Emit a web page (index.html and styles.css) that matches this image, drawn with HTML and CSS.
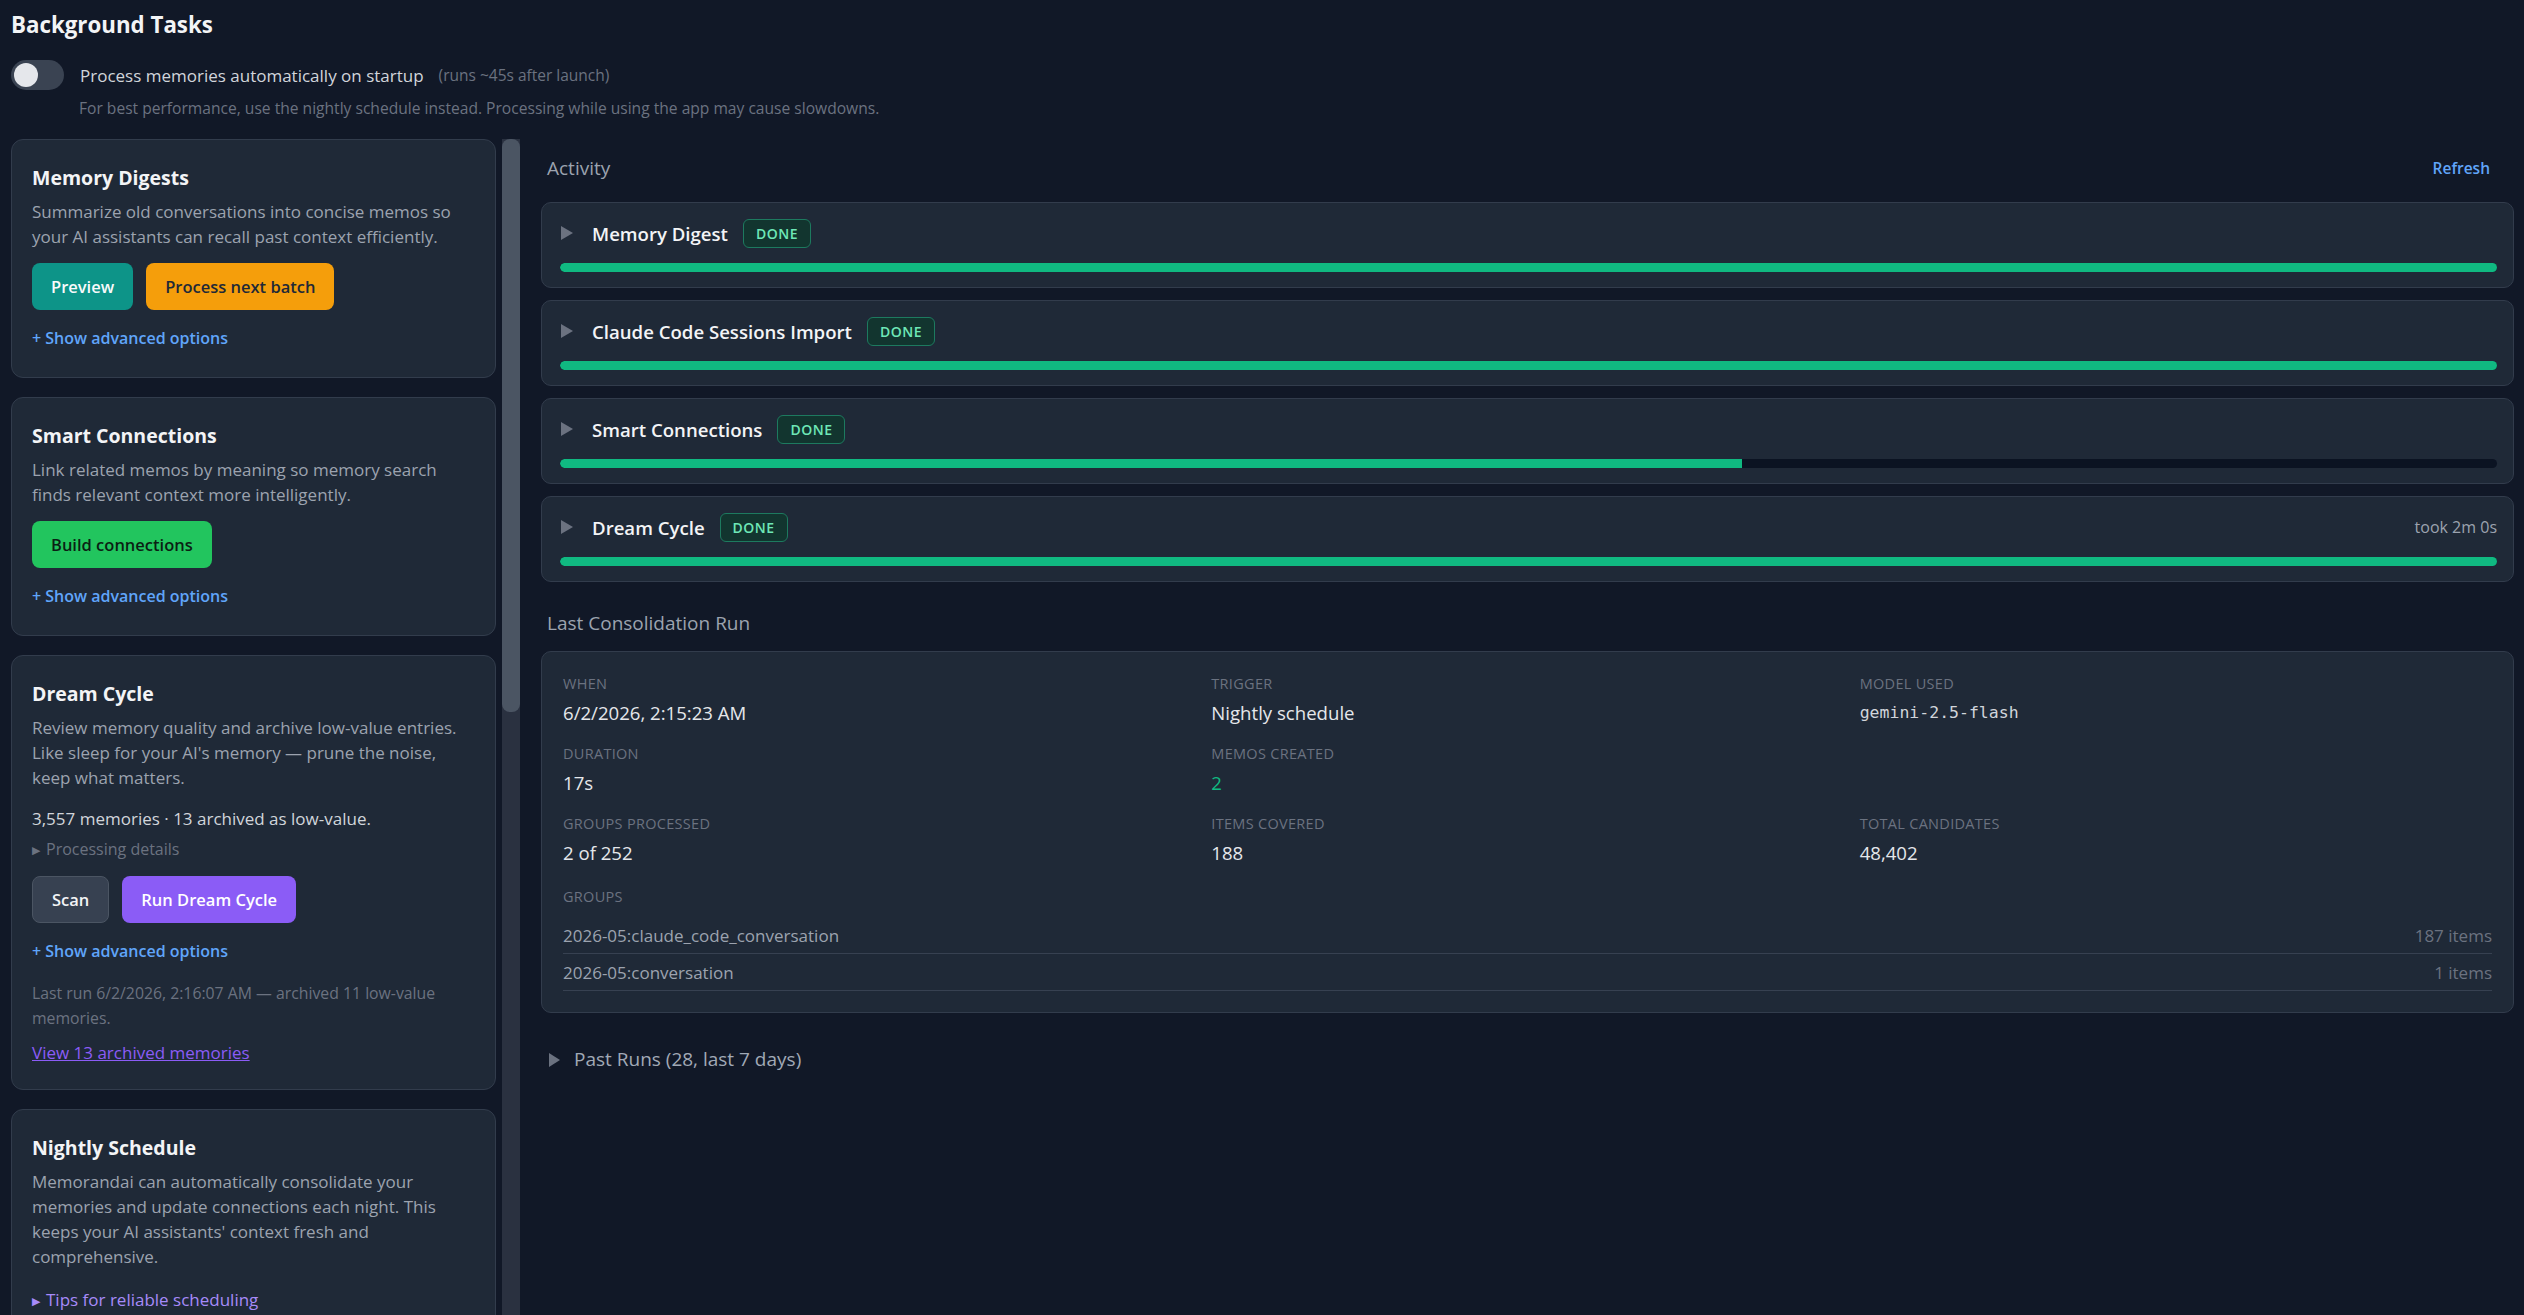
FILE: index.html
```html
<!DOCTYPE html>
<html lang="en">
<head>
    <meta charset="UTF-8">
    <meta name="viewport" content="width=device-width, initial-scale=1.0">
    <title>Background Tasks</title>
    <link rel="stylesheet" href="styles.css">
</head>
<body>
<div class="page">
    <header class="page-head">
        <h1>Background Tasks</h1>
        <div class="startup-row">
            <span class="toggle"><span class="knob"></span></span>
            <span class="startup-label">Process memories automatically on startup</span>
            <span class="startup-hint">(runs ~45s after launch)</span>
        </div>
        <p class="startup-note">For best performance, use the nightly schedule instead. Processing while using the app may cause slowdowns.</p>
    </header>

    <div class="layout">
        <div class="sidebar-wrap">
            <aside class="sidebar">
                <section class="card">
                    <h2>Memory Digests</h2>
                    <p class="desc">Summarize old conversations into concise memos so your AI assistants can recall past context efficiently.</p>
                    <div class="actions">
                        <button class="btn btn-teal">Preview</button>
                        <button class="btn btn-amber">Process next batch</button>
                    </div>
                    <a class="advanced" href="#">+ Show advanced options</a>
                </section>

                <section class="card">
                    <h2>Smart Connections</h2>
                    <p class="desc">Link related memos by meaning so memory search finds relevant context more intelligently.</p>
                    <div class="actions">
                        <button class="btn btn-green">Build connections</button>
                    </div>
                    <a class="advanced" href="#">+ Show advanced options</a>
                </section>

                <section class="card">
                    <h2>Dream Cycle</h2>
                    <p class="desc">Review memory quality and archive low-value entries. Like sleep for your AI's memory — prune the noise, keep what matters.</p>
                    <p class="stats">3,557 memories · 13 archived as low-value.</p>
                    <details class="details">
                        <summary>Processing details</summary>
                    </details>
                    <div class="actions">
                        <button class="btn btn-gray">Scan</button>
                        <button class="btn btn-violet">Run Dream Cycle</button>
                    </div>
                    <a class="advanced" href="#">+ Show advanced options</a>
                    <p class="last-run">Last run 6/2/2026, 2:16:07 AM — archived 11 low-value memories.</p>
                    <a class="archived" href="#">View 13 archived memories</a>
                </section>

                <section class="card">
                    <h2>Nightly Schedule</h2>
                    <p class="desc">Memorandai can automatically consolidate your memories and update connections each night. This keeps your AI assistants' context fresh and comprehensive.</p>
                    <details class="tips">
                        <summary>Tips for reliable scheduling</summary>
                    </details>
                </section>
            </aside>
            <!-- the list is taller than the window; its scrollbar is drawn here -->
            <div class="scroll-track"><div class="scroll-thumb"></div></div>
        </div>

        <main class="activity">
            <div class="section-head">
                <span class="section-title">Activity</span>
                <a class="refresh" href="#">Refresh</a>
            </div>

            <div class="task">
                <div class="task-head">
                    <span class="caret"></span>
                    <span class="task-name">Memory Digest</span>
                    <span class="badge">DONE</span>
                </div>
                <div class="bar"><div class="bar-fill" style="width: 100%"></div></div>
            </div>

            <div class="task">
                <div class="task-head">
                    <span class="caret"></span>
                    <span class="task-name">Claude Code Sessions Import</span>
                    <span class="badge">DONE</span>
                </div>
                <div class="bar"><div class="bar-fill" style="width: 100%"></div></div>
            </div>

            <div class="task">
                <div class="task-head">
                    <span class="caret"></span>
                    <span class="task-name">Smart Connections</span>
                    <span class="badge">DONE</span>
                </div>
                <div class="bar"><div class="bar-fill" style="width: 61%"></div></div>
            </div>

            <div class="task">
                <div class="task-head">
                    <span class="caret"></span>
                    <span class="task-name">Dream Cycle</span>
                    <span class="badge">DONE</span>
                    <span class="took">took 2m 0s</span>
                </div>
                <div class="bar"><div class="bar-fill" style="width: 100%"></div></div>
            </div>

            <div class="section-head run-head">
                <span class="section-title">Last Consolidation Run</span>
            </div>

            <div class="run-panel">
                <div class="run-grid">
                    <div class="stat">
                        <div class="stat-label">When</div>
                        <div class="stat-value">6/2/2026, 2:15:23 AM</div>
                    </div>
                    <div class="stat">
                        <div class="stat-label">Trigger</div>
                        <div class="stat-value">Nightly schedule</div>
                    </div>
                    <div class="stat">
                        <div class="stat-label">Model used</div>
                        <div class="stat-value mono">gemini-2.5-flash</div>
                    </div>
                    <div class="stat">
                        <div class="stat-label">Duration</div>
                        <div class="stat-value">17s</div>
                    </div>
                    <div class="stat">
                        <div class="stat-label">Memos created</div>
                        <div class="stat-value good">2</div>
                    </div>
                    <div class="stat"></div>
                    <div class="stat">
                        <div class="stat-label">Groups processed</div>
                        <div class="stat-value">2 of 252</div>
                    </div>
                    <div class="stat">
                        <div class="stat-label">Items covered</div>
                        <div class="stat-value">188</div>
                    </div>
                    <div class="stat">
                        <div class="stat-label">Total candidates</div>
                        <div class="stat-value">48,402</div>
                    </div>
                </div>

                <div class="stat-label groups-label">Groups</div>
                <ul class="groups">
                    <li><span>2026-05:claude_code_conversation</span><span class="count">187 items</span></li>
                    <li><span>2026-05:conversation</span><span class="count">1 items</span></li>
                </ul>
            </div>

            <details class="past-runs">
                <summary>Past Runs (28, last 7 days)</summary>
            </details>
        </main>
    </div>
</div>
</body>
</html>
```

FILE: styles.css
```css
* {
    box-sizing: border-box;
}
html, body {
    height: 100%;
}
body {
    margin: 0;
    background-color: #111827;
    color: #e5e7eb;
    font-family: "Open Sans", "Noto Sans", sans-serif;
    overflow: hidden;
}
a {
    text-decoration: none;
}
.page {
    height: 100%;
    display: flex;
    flex-direction: column;
    padding: 10px 10px 0 11px;
}

/* header */
.page-head h1 {
    margin: 0;
    font-size: 22.3px;
    line-height: 30px;
    font-weight: 700;
    color: #f3f4f6;
}
.startup-row {
    display: flex;
    align-items: center;
    margin-top: 20px;
    height: 30px;
}
.toggle {
    position: relative;
    flex: none;
    width: 53px;
    height: 30px;
    border-radius: 15px;
    background-color: #3a4352;
}
.toggle .knob {
    position: absolute;
    left: 3px;
    top: 3px;
    width: 24px;
    height: 24px;
    border-radius: 50%;
    background-color: #e5e7eb;
}
.startup-label {
    margin-left: 16px;
    font-size: 17px;
    color: #d1d5db;
}
.startup-hint {
    margin-left: 15px;
    font-size: 15.5px;
    color: #6b7280;
}
.startup-note {
    margin: 6px 0 19px 68px;
    font-size: 15.6px;
    line-height: 24px;
    color: #6b7280;
}

/* two columns */
.layout {
    flex: 1;
    min-height: 0;
    display: flex;
    gap: 21px;
}
.sidebar-wrap {
    flex: none;
    display: flex;
    gap: 6px;
}
.sidebar {
    width: 485px;
    overflow: hidden;
}
.scroll-track {
    width: 18px;
    background-color: #2a3140;
}
.scroll-thumb {
    height: 573px;
    background-color: #4b5563;
    border-radius: 8px;
}
.card {
    margin-bottom: 19px;
    padding: 23px 21px 26px 20px;
    background-color: #1f2937;
    border: 1px solid #323c4c;
    border-radius: 12px;
}
.card h2 {
    margin: 0;
    font-size: 19.5px;
    line-height: 30px;
    font-weight: 700;
    color: #f3f4f6;
}
.desc {
    margin: 6px 0 0;
    font-size: 17px;
    line-height: 25px;
    color: #9ca3af;
}
.actions {
    display: flex;
    gap: 13px;
    margin-top: 14px;
}
.btn {
    height: 47px;
    padding: 0 19px;
    border: none;
    border-radius: 8px;
    font-family: inherit;
    font-size: 16.5px;
    font-weight: 600;
    cursor: pointer;
}
.btn-teal {
    background-color: #0d9488;
    color: #f9fafb;
}
.btn-amber {
    background-color: #f59e0b;
    color: #1f2937;
}
.btn-green {
    background-color: #22c55e;
    color: #0b1f14;
}
.btn-gray {
    background-color: #374151;
    border: 1px solid #4b5563;
    color: #f3f4f6;
}
.btn-violet {
    background-color: #8b5cf6;
    color: #ffffff;
}
.advanced {
    display: block;
    margin-top: 15px;
    font-size: 16px;
    line-height: 26px;
    font-weight: 600;
    color: #60a5fa;
}
.stats {
    margin: 16px 0 0;
    font-size: 17px;
    line-height: 25px;
    color: #d1d5db;
}
.details summary,
.tips summary {
    list-style: none;
    cursor: pointer;
}
.details summary::before,
.tips summary::before {
    content: "\25B6";
    display: inline-block;
    margin-right: 6px;
    font-size: 11px;
    vertical-align: 1px;
}
.details {
    margin-top: 6px;
    font-size: 16px;
    line-height: 25px;
    color: #6b7280;
}
.last-run {
    margin: 17px 0 0;
    font-size: 15.8px;
    line-height: 25px;
    color: #6b7280;
}
.archived {
    display: block;
    margin-top: 12px;
    font-size: 17px;
    line-height: 20px;
    color: #8b5cf6;
    text-decoration: underline;
}
.tips {
    margin-top: 18px;
    font-size: 17px;
    line-height: 25px;
    color: #a78bfa;
}

/* activity column */
.activity {
    flex: 1;
    min-width: 0;
    padding-top: 14px;
}
.section-head {
    display: flex;
    align-items: center;
    justify-content: space-between;
    height: 30px;
    padding: 0 24px 0 6px;
    margin-bottom: 19px;
}
.section-title {
    font-size: 19px;
    color: #9ca3af;
}
.refresh {
    font-size: 15.5px;
    font-weight: 600;
    color: #60a5fa;
}
.task {
    margin-bottom: 12px;
    padding: 15px 16px 15px 18px;
    background-color: #1f2937;
    border: 1px solid #323c4c;
    border-radius: 10px;
}
.task-head {
    display: flex;
    align-items: center;
    height: 30px;
    margin-bottom: 15px;
}
.caret {
    width: 0;
    height: 0;
    margin-left: 1px;
    border-top: 7px solid transparent;
    border-bottom: 7px solid transparent;
    border-left: 12px solid #6b7280;
}
.task-name {
    margin-left: 19px;
    font-size: 18.6px;
    font-weight: 600;
    color: #f3f4f6;
}
.badge {
    margin-left: 15px;
    height: 29px;
    padding: 0 12px;
    display: flex;
    align-items: center;
    background-color: #12352f;
    border: 1px solid #1d7a5f;
    border-radius: 6px;
    font-size: 14px;
    font-weight: 600;
    letter-spacing: 0.5px;
    color: #6ee7b7;
}
.took {
    margin-left: auto;
    font-size: 16px;
    color: #9ca3af;
}
.bar {
    height: 9px;
    border-radius: 5px;
    background-color: #0b1322;
    overflow: hidden;
}
.bar-fill {
    height: 100%;
    background-color: #10b981;
    border-radius: 5px 0 0 5px;
}
.run-head {
    margin-top: 26px;
    margin-bottom: 13px;
}
.run-panel {
    padding: 22px 21px 21px;
    background-color: #1f2937;
    border: 1px solid #323c4c;
    border-radius: 10px;
}
.run-grid {
    display: grid;
    grid-template-columns: repeat(3, 1fr);
    column-gap: 16px;
    row-gap: 18px;
}
.stat-label {
    font-size: 14.5px;
    line-height: 20px;
    text-transform: uppercase;
    letter-spacing: 0.3px;
    color: #6b7280;
}
.stat-value {
    margin-top: 6px;
    font-size: 18.6px;
    line-height: 26px;
    color: #e5e7eb;
}
.stat-value.mono {
    font-family: "DejaVu Sans Mono", "Liberation Mono", monospace;
    font-size: 16.5px;
    color: #d1d5db;
}
.stat-value.good {
    color: #10b981;
}
.groups-label {
    margin-top: 21px;
}
.groups {
    list-style: none;
    margin: 10px 0 0;
    padding: 0;
}
.groups li {
    display: flex;
    justify-content: space-between;
    align-items: center;
    height: 37px;
    border-bottom: 1px solid #374151;
    font-size: 17px;
    color: #9ca3af;
}
.groups .count {
    font-size: 17px;
    color: #6b7280;
}
.past-runs {
    margin-top: 33px;
    padding-left: 8px;
    font-size: 19px;
    font-weight: 500;
    color: #a1a9b6;
}
.past-runs summary {
    list-style: none;
    cursor: pointer;
}
.past-runs summary::before {
    content: "";
    display: inline-block;
    margin-right: 14px;
    border-top: 7px solid transparent;
    border-bottom: 7px solid transparent;
    border-left: 11px solid #6b7280;
    vertical-align: -1px;
}
```
